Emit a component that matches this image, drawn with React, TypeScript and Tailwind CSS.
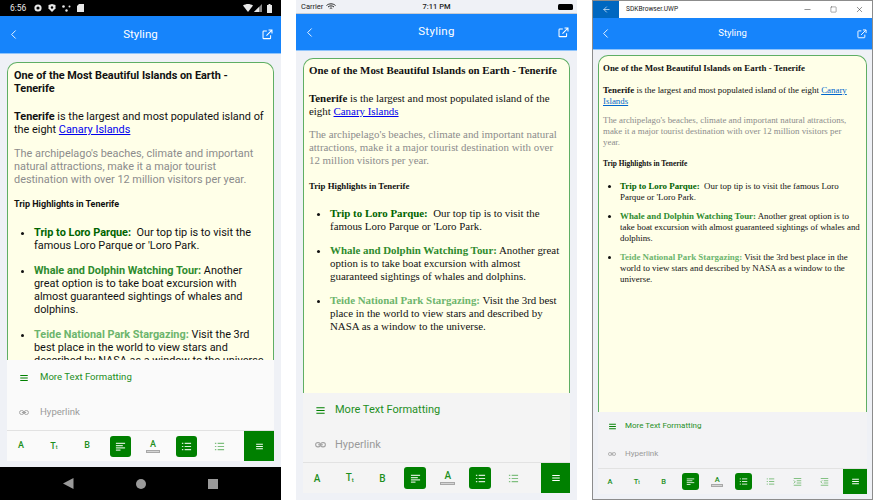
import React from "react";
import { ChevronLeft, Minus, Square, X, ArrowLeft } from "lucide-react";

const G = "#008000";

function Ext({ s }: { s: number }) {
  return (
    <svg width={s} height={s} viewBox="0 0 16 16" fill="none" stroke="#fff" strokeWidth="1.5">
      <path d="M7 3H2.500A1 1 0 0 0 1.500 4v9a1 1 0 0 0 1 1h9a1 1 0 0 0 1-1V9" />
      <path d="M6.500 9.500 14 2M9.500 1.500H14.500V6.500" />
    </svg>
  );
}
function Lines({ s, c, kind }: { s: number; c: string; kind: "menu" | "align" | "bul" | "in" | "out" }) {
  const st = { stroke: c, strokeWidth: 1.3 };
  return (
    <svg width={s} height={s} viewBox="0 0 12 12" fill="none" {...st}>
      {kind === "menu" && <path d="M1.500 3h9M1.500 6h9M1.500 9h9" />}
      {kind === "align" && <path d="M1 2.500h10M1 5h7.500M1 7.500h10M1 10h5" />}
      {kind === "bul" && <path d="M1 2.500h1.500M4 2.500h7M1 6h1.500M4 6h7M1 9.500h1.500M4 9.500h7" />}
      {kind === "in" && <path d="M1 2h10M5 5h6M5 8h6M1 11h10M1 4.500 3 6.500 1 8.500" />}
      {kind === "out" && <path d="M1 2h10M5 5h6M5 8h6M1 11h10M3 4.500 1 6.500 3 8.500" />}
    </svg>
  );
}
function LinkIco({ w }: { w: number }) {
  return (
    <svg width={w} height={w / 2} viewBox="0 0 14 7" fill="none" stroke="#a3a3a3" strokeWidth="1.4">
      <rect x="0.8" y="0.8" width="6" height="5.4" rx="2.6" />
      <rect x="7.2" y="0.8" width="6" height="5.4" rx="2.6" />
      <path d="M4 3.500h6" />
    </svg>
  );
}

type Theme = {
  card: string; font: string; h1: string; p1: string; grey: string; h2: string; ul: string; li: string; link: string;
};

function Card({ t }: { t: Theme }) {
  return (
    <div className={`flex-1 min-h-0 overflow-hidden bg-[#ffffe8] border border-[#5fae64] border-b-0 ${t.card} ${t.font} text-[#111]`}>
      <p className={`font-bold ${t.h1}`}>One of the Most Beautiful Islands on Earth - Tenerife</p>
      <p className={t.p1}>
        <b>Tenerife</b> is the largest and most populated island of the eight{" "}
        <a className={`underline ${t.link}`}>Canary Islands</a>
      </p>
      <p className={`text-[#8c8c8c] ${t.grey}`}>
        The archipelago's beaches, climate and important natural attractions, make it a major tourist destination with over 12 million visitors per year.
      </p>
      <p className={`font-bold ${t.h2}`}>Trip Highlights in Tenerife</p>
      <ul className={`list-disc ${t.ul}`}>
        <li className={t.li}>
          <b className="text-[#006400]">Trip to Loro Parque:</b>&nbsp; Our top tip is to visit the famous Loro Parque or 'Loro Park.
        </li>
        <li className={t.li}>
          <b className="text-[#2e8b2e]">Whale and Dolphin Watching Tour:</b> Another great option is to take boat excursion with almost guaranteed sightings of whales and dolphins.
        </li>
        <li className={t.li}>
          <b className="text-[#6db56d]">Teide National Park Stargazing:</b> Visit the 3rd best place in the world to view stars and described by NASA as a window to the universe.
        </li>
      </ul>
    </div>
  );
}

type MT = {
  wrap: string; row: string; rowGrey: string; iconBox: string; text: string; tb: string; items: string; btn: string; act: string; letter: string; icon: number; link: number; menu: number; actIcon: number;
};

function Tool({ m, children, on }: { m: MT; children: React.ReactNode; on?: boolean }) {
  return (
    <div className={`${m.btn} shrink-0 flex flex-col items-center justify-center ${on ? "bg-[#008000] rounded-[3px]" : ""} ${m.letter} font-medium text-[#1d8f1d] font-['Roboto',sans-serif]`}>
      {children}
    </div>
  );
}

function Menu({ m, ext }: { m: MT; ext?: boolean }) {
  const I = m.icon;
  return (
    <div className={`shrink-0 flex flex-col ${m.wrap} font-['Roboto',sans-serif]`}>
      <div className={`flex items-center ${m.row}`}>
        <div className={`${m.iconBox} flex justify-center`}><Lines s={m.menu} c={G} kind="menu" /></div>
        <span className={`${m.text} text-[#1f8f1f]`}>More Text Formatting</span>
      </div>
      <div className={`flex items-center ${m.rowGrey}`}>
        <div className={`${m.iconBox} flex justify-center`}><LinkIco w={m.link} /></div>
        <span className={`${m.text} text-[#9a9a9a]`}>Hyperlink</span>
      </div>
      <div className={`flex items-stretch border-t border-[#e2e2e2] ${m.tb}`}>
        <div className={`flex-1 flex items-center ${m.items}`}>
          <Tool m={m}>A</Tool>
          <Tool m={m}><span className="flex items-end leading-none">T<span className="text-[0.6em] leading-none">t</span></span></Tool>
          <Tool m={m}>B</Tool>
          <Tool m={m} on><Lines s={I} c="#cfe6cf" kind="align" /></Tool>
          <Tool m={m}>
            <span className="leading-none">A</span>
            <span className="block w-[70%] h-[3px] mt-[1px] bg-[#d4d4d4] border border-[#a8a8a8]" />
          </Tool>
          <Tool m={m} on><Lines s={I} c="#d6ead6" kind="bul" /></Tool>
          <Tool m={m}><Lines s={I} c="#7fbf7f" kind="bul" /></Tool>
          {ext && <Tool m={m}><Lines s={I} c="#7fbf7f" kind="in" /></Tool>}
          {ext && <Tool m={m}><Lines s={I} c="#7fbf7f" kind="out" /></Tool>}
        </div>
        <div className={`${m.act} bg-[#008000] flex items-center justify-center`}>
          <Lines s={m.actIcon} c="#ffffff" kind="menu" />
        </div>
      </div>
    </div>
  );
}

function Header({ cls, title, extS, pl, pr }: { cls: string; title: string; extS: number; pl: string; pr: string }) {
  return (
    <div className={`shrink-0 bg-[#1684fb] border-b border-[#8fc4fb] flex items-center justify-between text-white ${cls} ${pl} ${pr} relative`}>
      <ChevronLeft size={15} strokeWidth={1.4} />
      <span className={`font-['Roboto',sans-serif] ${title} absolute inset-x-0 text-center`}>Styling</span>
      <Ext s={extS} />
    </div>
  );
}

export default function App() {
  const android: Theme = {
    card: "rounded-t-[10px] pt-[6px] pl-[6px] pr-[4px]",
    font: "font-['Roboto',sans-serif] text-[10.9px] leading-[13px]",
    h1: "mb-[15px]",
    p1: "mb-[11px]",
    grey: "mb-[12px]",
    h2: "text-[9px] mb-[15px]",
    ul: "pl-[20px]",
    li: "mb-[12px]",
    link: "text-[#0000ee]",
  };
  const ios: Theme = {
    card: "rounded-t-[10px] pt-[5px] pl-[5px] pr-[6px]",
    font: "font-['Liberation_Serif',serif] text-[10.9px] leading-[13px]",
    h1: "mb-[15px]",
    p1: "mb-[10px]",
    grey: "mb-[13px]",
    h2: "text-[8.8px] mb-[14px]",
    ul: "pl-[21px]",
    li: "mb-[11px]",
    link: "text-[#0000ee]",
  };
  const uwp: Theme = {
    card: "rounded-t-[10px] pt-[7px] pl-[4px] pr-[4px]",
    font: "font-['Liberation_Serif',serif] text-[8.9px] leading-[11px]",
    h1: "mb-[11px]",
    p1: "mb-[8px]",
    grey: "mb-[10px] pr-[3px]",
    h2: "text-[7.4px] mb-[12px]",
    ul: "pl-[17px]",
    li: "mb-[8px]",
    link: "text-[#0066cc]",
  };
  const m1: MT = {
    wrap: "h-[101px] bg-[#fafafa]", row: "h-[35px]", rowGrey: "h-[35px]", iconBox: "w-[33px] pl-[1px]", text: "text-[9.6px]",
    tb: "h-[31px] bg-[#fafafa]", items: "pl-[3.5px] gap-[12px]", btn: "w-[21px] h-[21px]", act: "w-[30px]", letter: "text-[9px]", icon: 11, link: 10, menu: 10, actIcon: 9,
  };
  const m2: MT = {
    wrap: "h-[100px] bg-[#f4f4f4]", row: "h-[35px]", rowGrey: "h-[34px]", iconBox: "w-[32px] pl-[3px]", text: "text-[11px]",
    tb: "h-[31px] bg-[#f4f4f4]", items: "pl-[3px] gap-[10.7px]", btn: "w-[22px] h-[22px]", act: "w-[29px]", letter: "text-[10px]", icon: 11, link: 11, menu: 11, actIcon: 10,
  };
  const m3: MT = {
    wrap: "h-[82px] bg-[#f3f3f5]", row: "h-[28px]", rowGrey: "h-[28px]", iconBox: "w-[27px] pl-[1px]", text: "text-[8px]",
    tb: "h-[26px] bg-[#f3f3f5]", items: "pl-[3.5px] gap-[9.8px]", btn: "w-[17px] h-[17px]", act: "w-[24px]", letter: "text-[7.5px]", icon: 9, link: 8, menu: 9, actIcon: 9,
  };

  return (
    <div className="w-[873px] h-[500px] flex bg-white overflow-hidden">
      {/* Android */}
      <div className="w-[281px] h-full flex flex-col bg-[#eff1f6]">
        <div className="h-[16px] shrink-0 bg-black text-[#e8e8e8] flex items-center pl-[10px] pr-[9px] gap-[6px] font-['Roboto',sans-serif] text-[8.5px]">
          <span className="mr-[2px]">6:56</span>
          <svg width="8" height="8" viewBox="0 0 8 8"><circle cx="4" cy="4" r="2.6" fill="none" stroke="#e8e8e8" strokeWidth="2" /></svg>
          <svg width="8" height="8" viewBox="0 0 8 8"><path d="M.5 1 4 0l3.500 1v3.500L4 8 .5 4.500z" fill="#e8e8e8" /><circle cx="4" cy="3.500" r="1.200" fill="#000" /></svg>
          <svg width="9" height="7" viewBox="0 0 9 7" fill="#e8e8e8"><circle cx="1.500" cy="1.500" r="1.300" /><circle cx="7.500" cy="1.500" r="1" /><circle cx="4.500" cy="5.500" r="1.200" /></svg>
          <svg width="7" height="8" viewBox="0 0 7 8" fill="#e8e8e8"><path d="M2 0h5v8H0V2z" /></svg>
          <span className="flex-1" />
          <svg width="10" height="8" viewBox="0 0 10 8" fill="#e8e8e8"><path d="M0 1.500C3 -.5 7 -.5 10 1.500L5 8z" /></svg>
          <svg width="8" height="8" viewBox="0 0 8 8" className="-ml-[5px]"><path d="M8 0v8H0z" fill="#8a8a8a" /><path d="M5 3v5H0z" fill="#e8e8e8" /></svg>
          <svg width="5" height="9" viewBox="0 0 5 9" fill="#e8e8e8" className="-ml-[1px]"><path d="M1.500 0h2v1H5v8H0V1h1.500z" /></svg>
        </div>
        <Header cls="h-[38px]" title="text-[11.5px]" extS={11} pl="pl-[6px]" pr="pr-[8px]" />
        <div className="flex-1 min-h-0 flex flex-col pt-[8px] px-[7px] pb-[6px]">
          <Card t={android} />
          <Menu m={m1} />
        </div>
        <div className="h-[33px] shrink-0 bg-black flex items-center justify-center gap-[62px]">
          <svg width="11" height="11" viewBox="0 0 11 11"><path d="M10.500 0v11L0 5.500z" fill="#9a9a9a" /></svg>
          <span className="w-[10px] h-[10px] rounded-full bg-[#9a9a9a]" />
          <span className="w-[10px] h-[10px] bg-[#9a9a9a]" />
        </div>
      </div>

      {/* iOS */}
      <div className="w-[281px] h-full ml-[15px] flex flex-col bg-[#eff1f6]">
        <div className="h-[13px] shrink-0 flex items-center justify-between px-[5px] text-[#222] font-['Roboto',sans-serif] relative">
          <span className="flex items-center gap-[3px] text-[7.5px]">Carrier
            <svg width="10" height="7" viewBox="0 0 10 7" fill="none" stroke="#222" strokeWidth="1"><path d="M.5 2.500C3 .3 7 .3 9.500 2.500M2 4c1.700-1.500 4.300-1.500 6 0M3.800 5.500c.7-.6 1.700-.6 2.400 0" /></svg>
          </span>
          <span className="absolute inset-x-0 text-center text-[7.5px] font-medium">7:11 PM</span>
          <span className="w-[15px] h-[6px] rounded-[1.5px] bg-black mr-[-1px]" />
        </div>
        <div className="h-px bg-[#c8ccd2] shrink-0" />
        <Header cls="h-[37px]" title="text-[11.5px] tracking-[0.3px]" extS={11} pl="pl-[6px]" pr="pr-[8px]" />
        <div className="flex-1 min-h-0 flex flex-col pt-[7px] px-[7px] pb-[7px]">
          <Card t={ios} />
          <Menu m={m2} />
        </div>
      </div>

      {/* UWP */}
      <div className="w-[281px] h-full ml-[15px] flex flex-col bg-[#eff1f6] border border-[#8c8c8c]">
        <div className="h-[17px] shrink-0 bg-white flex items-center text-[#222]">
          <div className="w-[26px] h-full bg-[#0067c0] flex items-center justify-center"><ArrowLeft size={9} color="#d5e5f7" /></div>
          <span className="ml-[7px] text-[6.6px] font-['Roboto',sans-serif] flex-1">SDKBrowser.UWP</span>
          <div className="w-[27px] flex justify-center"><Minus size={9} strokeWidth={1.3} /></div>
          <div className="w-[25px] flex justify-center"><Square size={7} strokeWidth={1.3} /></div>
          <div className="w-[26px] flex justify-center"><X size={9} strokeWidth={1.3} /></div>
        </div>
        <Header cls="h-[32px]" title="text-[9.5px]" extS={10} pl="pl-[5px]" pr="pr-[5px]" />
        <div className="flex-1 min-h-0 flex flex-col pt-[5px] px-[5px] pb-[5px]">
          <Card t={uwp} />
          <Menu m={m3} ext />
        </div>
      </div>
    </div>
  );
}
